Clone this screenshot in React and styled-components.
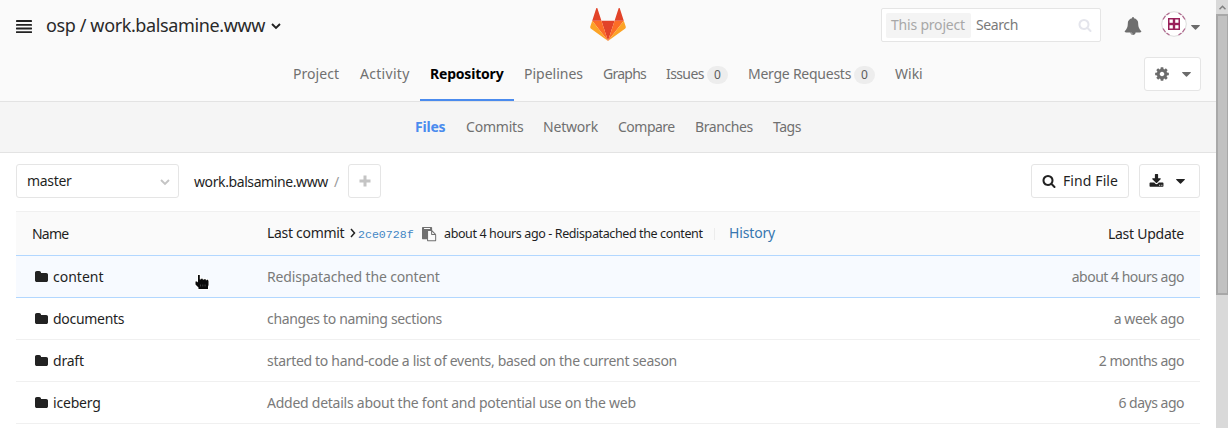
import React from "react";
import styled, { createGlobalStyle, css } from "styled-components";

const Global = createGlobalStyle`
  *, *::before, *::after { box-sizing: border-box; }
  html, body { margin: 0; height: 100%; overflow: hidden; background: #fff; }
  body { font: 14px/20px "Noto Sans", "Open Sans", sans-serif; color: #1f1f1f; }
  #root { height: 100%; }
  svg { display: block; flex: none; }
`;

const Window = styled.div`
  display: flex;
  height: 428px;
  overflow: hidden;
`;
const Page = styled.div`
  width: 1216px;
  flex: none;
`;

/* Text of a fixed measure, so that neighbours keep their places. */
const Label = styled.span`
  display: block;
  flex: none;
  white-space: pre;
  width: ${(p) => (p.$w ? p.$w + "px" : "auto")};
  letter-spacing: ${(p) => p.$ls || 0}px;
`;

/* ---------- header ---------- */
const Header = styled.header`
  height: 102px;
  background: #fafafa;
  border-bottom: 1px solid #e3e3e3;
`;
const TopBar = styled.div`
  display: flex;
  height: 50px;
  padding-left: 16px;
`;
const Side = styled.div`
  display: flex;
  align-items: flex-start;
  width: ${(p) => p.$w}px;
  flex: none;
`;
const MenuToggle = styled.div`
  margin: 20px 14px 0 0;
`;
const ProjectTitle = styled.h1`
  display: flex;
  margin: 11px 0 0;
  font-size: 18px;
  line-height: 28px;
  font-weight: 400;
  color: #292929;
  svg { margin: 12px 0 0 1px; }
`;
const Logo = styled.div`
  width: 291px;
  padding: 8px 0 0 1px;
`;
const SearchBox = styled.div`
  display: flex;
  align-items: center;
  width: 220px;
  height: 34px;
  margin: 8px 0 0 1px;
  padding: 0 8px 0 4px;
  background: #fff;
  border: 1px solid #e5e5e5;
  border-radius: 2px;
`;
const Scope = styled.span`
  height: 25px;
  width: 85px;
  padding-left: 5px;
  margin-right: 5px;
  line-height: 24px;
  background: #f4f4f4;
  color: #a8a8a8;
  border-radius: 2px;
`;
const SearchHint = styled.span`
  flex: 1;
  color: #7a7a7a;
`;
const Bell = styled.div`
  margin: 17px 0 0 23px;
`;
const Avatar = styled.div`
  margin: 11px 4px 0 19px;
`;
const CaretSlot = styled.div`
  padding-top: 25px;
`;

const NavRow = styled.div`
  display: flex;
  height: 51px;
  padding-left: 278px;
`;
const NavItem = styled.a`
  display: flex;
  height: 51px;
  width: ${(p) => p.$w}px;
  padding: 14px 0 0 ${(p) => p.$pad}px;
  flex: none;
  color: ${(p) => (p.$active ? "#000" : "#707070")};
  font-weight: ${(p) => (p.$active ? 700 : 400)};
  ${(p) => p.$active && css`border-bottom: 2px solid #4a8bee;`}
`;
const Badge = styled.span`
  width: 21px;
  height: 18px;
  margin: 2px 0 0 3px;
  border-radius: 9px;
  background: #ededed;
  color: #5c5c5c;
  font-size: 12px;
  line-height: 17px;
  text-align: center;
`;
const Button = styled.button`
  display: flex;
  align-items: center;
  flex: none;
  width: ${(p) => p.$w}px;
  height: 34px;
  padding: 0 0 0 ${(p) => p.$pad}px;
  gap: ${(p) => p.$gap || 0}px;
  background: #fff;
  border: 1px solid #e5e5e5;
  border-radius: 3px;
  font: inherit;
  color: inherit;
`;
const SettingsSlot = styled.div`
  margin: 7px 15px 0 auto;
`;

const SubNav = styled.nav`
  display: flex;
  height: 51px;
  padding: 15px 0 0 415px;
  background: #f5f5f5;
  border-bottom: 1px solid #e3e3e3;
`;
const SubItem = styled.a`
  width: ${(p) => p.$w}px;
  letter-spacing: ${(p) => p.$ls}px;
  flex: none;
  color: ${(p) => (p.$active ? "#4a8bee" : "#707070")};
  font-weight: ${(p) => (p.$active ? 700 : 400)};
`;

/* ---------- tree toolbar ---------- */
const Toolbar = styled.div`
  display: flex;
  height: 58px;
  padding: 11px 16px 0;
`;
const BranchSelect = styled.div`
  display: flex;
  align-items: center;
  justify-content: space-between;
  width: 163px;
  height: 34px;
  margin-right: 15px;
  padding: 0 8px 0 10px;
  border: 1px solid #e5e5e5;
  border-radius: 3px;
  svg { margin-top: 3px; }
`;
const Crumbs = styled.div`
  display: flex;
  padding-top: 8px;
  width: 154px;
`;
const Slash = styled.span`
  color: #9a9a9a;
`;
const Actions = styled.div`
  display: flex;
  gap: 10px;
  margin-left: auto;
`;

/* ---------- file table ---------- */
const Table = styled.div`
  margin: 0 16px;
  border-top: 1px solid #f0f0f0;
`;
const HeadRow = styled.div`
  display: flex;
  height: 43px;
  padding: 12px 16px 0;
  background: #fafafa;
`;
const Row = styled.div`
  display: flex;
  align-items: center;
  height: ${(p) => (p.$hover ? 43 : 42)}px;
  padding: 0 16px 0 18px;
  background: ${(p) => (p.$hover ? "#f7faff" : "#fff")};
  border-top: ${(p) => (p.$hover ? "1px solid #b2d7ff" : "0")};
  border-bottom: 1px solid ${(p) => (p.$hover ? "#b2d7ff" : "#f0f0f0")};
`;
const NameCell = styled.div`
  display: flex;
  align-items: center;
  gap: 4px;
  width: 233px;
`;
const Muted = styled.div`
  color: #7a7a7a;
  letter-spacing: ${(p) => p.$ls || 0}px;
  white-space: nowrap;
`;
const Updated = styled(Muted)`
  margin-left: auto;
`;
const HeadUpdated = styled(Updated)`
  color: #1f1f1f;
`;
const CommitCell = styled.div`
  display: flex;
  align-items: flex-start;
  margin-top: -1px;
`;
const Sha = styled.code`
  width: 64px;
  padding-top: 2px;
  font: 11.6px/20px "Liberation Mono", monospace;
  color: #4286c4;
`;
const CommitText = styled(Label)`
  font-size: 12.5px;
  line-height: 21px;
`;
const Divider = styled.span`
  width: 1px;
  height: 12px;
  margin: 5px 14px 0 11px;
  background: #ececec;
`;
const Link = styled(Label)`
  color: #3777b0;
`;

/* ---------- scrollbar and pointer ---------- */
const Scrollbar = styled.div`
  display: flex;
  flex-direction: column;
  width: 12px;
  flex: none;
  background: #d9d9d9;
`;
const ScrollUp = styled.div`
  display: flex;
  align-items: center;
  justify-content: center;
  height: 14px;
`;
const Thumb = styled.div`
  height: 281px;
  background: #c1c1c1;
  border: 1px solid #a8a8a8;
  border-width: 2px 1px 2px 2px;
`;
const Pointer = styled.svg`
  position: absolute;
  left: 194px;
  top: 273px;
`;

const paths = {
  folder: "M1728 608v704q0 92-66 158t-158 66h-1216q-92 0-158-66t-66-158v-960q0-92 66-158t158-66h320q92 0 158 66t66 158v32h672q92 0 158 66t66 158z",
  search: "M1216 832q0-185-131.500-316.500t-316.500-131.500-316.500 131.500-131.500 316.500 131.500 316.500 316.500 131.500 316.500-131.500 131.500-316.500zm512 832q0 52-38 90t-90 38q-54 0-90-38l-343-342q-179 124-399 124-143 0-273.500-55.500t-225-150-150-225-55.500-273.500 55.500-273.500 150-225 225-150 273.500-55.500 273.500 55.500 225 150 150 225 55.500 273.500q0 220-124 399l343 343q37 37 37 90z",
  download: "M1344 1344q0-26-19-45t-45-19-45 19-19 45 19 45 45 19 45-19 19-45zm256 0q0-26-19-45t-45-19-45 19-19 45 19 45 45 19 45-19 19-45zm128-224v320q0 40-28 68t-68 28h-1472q-40 0-68-28t-28-68v-320q0-40 28-68t68-28h465l135 136q58 56 136 56t136-56l136-136h464q40 0 68 28t28 68zm-325-569q17 41-14 70l-448 448q-18 19-45 19t-45-19l-448-448q-31-29-14-70 17-39 59-39h256v-448q0-26 19-45t45-19h256q26 0 45 19t19 45v448h256q42 0 59 39z",
  cog: "M1152 896q0-106-75-181t-181-75-181 75-75 181 75 181 181 75 181-75 75-181zm512-109v222q0 12-8 23t-20 13l-185 28q-19 54-39 91 35 50 107 138 10 12 10 25t-9 23q-27 37-99 108t-94 71q-12 0-26-9l-138-108q-44 23-91 38-16 136-29 186-7 28-36 28h-222q-14 0-24.500-8.500t-11.500-21.500l-28-184q-49-16-90-37l-141 107q-10 9-25 9-14 0-25-11-126-114-165-168-7-10-7-23 0-12 8-23 15-21 51-66.500t54-70.500q-27-50-41-99l-183-27q-13-2-21-12.500t-8-23.500v-222q0-12 8-23t19-13l186-28q14-46 39-92-40-57-107-138-10-12-10-24 0-10 9-23 26-36 98.500-107.500t94.500-71.500q13 0 26 10l138 107q44-23 91-38 16-136 29-186 7-28 36-28h222q14 0 24.500 8.500t11.500 21.500l28 184q49 16 90 37l142-107q9-9 24-9 13 0 25 10 129 119 165 170 7 8 7 22 0 12-8 23-15 21-51 66.500t-54 70.500q26 50 41 98l183 28q13 2 21 12.500t8 23.500z",
  bell: "M912 1696q0-16-16-16-59 0-101.500-42.500t-42.500-101.500q0-16-16-16t-16 16q0 73 51.500 124.500t124.500 51.500q16 0 16-16zm816-288q0 52-38 90t-90 38h-448q0 106-75 181t-181 75-181-75-75-181h-448q-52 0-90-38t-38-90q50-42 91-88t85-119.500 74.500-158.500 50-206 19.500-260q0-152 117-282.500t307-158.500q-8-19-8-39 0-40 28-68t68-28 68 28 28 68q0 20-8 39 190 28 307 158.500t117 282.500q0 139 19.500 260t50 206 74.500 158.500 85 119.500 91 88z",
  paste: "M768 1664h896v-640h-416q-40 0-68-28t-28-68v-416h-384v1152zm256-1440v-64q0-13-9.500-22.500t-22.500-9.500h-704q-13 0-22.500 9.500t-9.500 22.500v64q0 13 9.500 22.500t22.500 9.500h704q13 0 22.500-9.500t9.500-22.500zm256 672h299l-299-299v299zm512 128v672q0 40-28 68t-68 28h-960q-40 0-68-28t-28-68v-160h-544q-40 0-68-28t-28-68v-1344q0-40 28-68t68-28h1088q40 0 68 28t28 68v328q21 13 36 28l408 408q28 28 48 76t20 88z",
};

const Icon = ({ name, size = 14, color = "#222" }) => (
  <svg width={size} height={size} viewBox="0 0 1792 1792" fill={color} aria-hidden="true">
    <path d={paths[name]} />
  </svg>
);
/* Folder glyph, flush with the left edge of its box. */
const Folder = () => (
  <svg width="15" height="14" viewBox="0 0 1920 1792" fill="#222" aria-hidden="true">
    <path transform="translate(64 0)" d={paths.folder} />
  </svg>
);
const Bars = () => (
  <svg width="16" height="14" viewBox="0 0 16 14" fill="#222">
    <rect y="0" width="16" height="2" rx=".4" />
    <rect y="4" width="16" height="1.800" rx=".4" />
    <rect y="7.600" width="16" height="1.900" rx=".4" />
    <rect y="11.200" width="16" height="1.900" rx=".4" />
  </svg>
);
const Caret = ({ color = "#6b6b6b" }) => (
  <svg width="9" height="5" viewBox="0 0 9 5" fill={color}>
    <path d="M.6 0h7.800a.5.5 0 0 1 .4.800L5 4.500a.7.7 0 0 1-1 0L.2.8A.5.5 0 0 1 .6 0z" />
  </svg>
);
const Chevron = ({ color, w = 10, h = 7, stroke = 1.9 }) => (
  <svg width={w} height={h} viewBox="0 0 10 7" fill="none" stroke={color} strokeWidth={stroke}>
    <path d="M1 1l4 3.900L9 1" />
  </svg>
);
const ScrollArrow = () => (
  <svg width="7" height="5" viewBox="0 0 7 5" fill="none" stroke="#808080" strokeWidth="1.500">
    <path d="M0.500 4.200l3-3 3 3" />
  </svg>
);

const Tanuki = () => (
  <svg width="36" height="33" viewBox="0 0 210 194">
    <path fill="#e24329" d="M105 193.700L143.700 74.700H66.400z" />
    <path fill="#fc6d26" d="M105 193.700L66.400 74.700H12.300zM105 193.700L143.700 74.700h54.100z" />
    <path fill="#fca326" d="M12.300 74.700L.5 110.900c-1.100 3.300.1 6.900 2.900 8.900L105 193.700zM197.800 74.700l11.800 36.200c1.100 3.300-.1 6.900-2.900 8.900L105 193.700z" />
    <path fill="#e24329" d="M12.300 74.700h54.100L43.100 3.100c-1.200-3.700-6.400-3.700-7.600 0zM197.800 74.700h-54.100L167 3.100c1.200-3.700 6.400-3.700 7.600 0z" />
  </svg>
);

const Identicon = () => (
  <svg width="26" height="26" viewBox="0 0 26 26">
    <circle cx="13" cy="13" r="12.300" fill="#fff" stroke="#dcdcdc" strokeWidth="1" />
    <g stroke="#b0668c" strokeWidth="1.200" fill="none">
      <path d="M2 8.500L4.500 4.800M5.500 4L8.500 2M17.500 2l3 2M21.500 4.800L24 8.500M2 17.500l2.500 3.700M5.500 22l3 2M17.500 24l3-2M21.500 21.200L24 17.500" />
    </g>
    <rect x="7" y="7" width="12" height="12" fill="#98215a" />
    <g fill="#fff">
      <rect x="8.500" y="8.500" width="3.300" height="3.300" />
      <rect x="14.200" y="8.500" width="3.300" height="3.300" />
      <rect x="8.500" y="14.200" width="3.300" height="3.300" />
      <rect x="14.200" y="14.200" width="3.300" height="3.300" />
    </g>
  </svg>
);

const nav = [
  { text: "Project", w: 67, pad: 15, ls: 0.05 },
  { text: "Activity", w: 75, pad: 15, ls: 0.3 },
  { text: "Repository", w: 94, pad: 10, ls: -0.2, active: true },
  { text: "Pipelines", w: 74, pad: 10, ls: 0 },
  { text: "Graphs", w: 63, pad: 15, ls: -0.75 },
  { text: "Issues", w: 82, pad: 15, ls: -0.6, count: 0, lw: 38 },
  { text: "Merge Requests", w: 147, pad: 15, ls: -0.25, count: 0, lw: 103 },
  { text: "Wiki", w: 60, pad: 15, ls: 0 },
];
const subnav = [
  { text: "Files", w: 51, ls: -0.2, active: true },
  { text: "Commits", w: 77, ls: -0.2 },
  { text: "Network", w: 75, ls: -0.2 },
  { text: "Compare", w: 77, ls: -0.5 },
  { text: "Branches", w: 78, ls: -0.4 },
  { text: "Tags", w: 50, ls: -0.5 },
];
const files = [
  { name: "content", ls: 0, msg: "Redispatached the content", mls: -0.14, when: "about 4 hours ago", wls: -0.5, hover: true },
  { name: "documents", ls: -0.3, msg: "changes to naming sections", mls: -0.34, when: "a week ago", wls: -0.4 },
  { name: "draft", ls: -0.2, msg: "started to hand-code a list of events, based on the current season", mls: -0.31, when: "2 months ago", wls: -0.47 },
  { name: "iceberg", ls: -0.2, msg: "Added details about the font and potential use on the web", mls: -0.25, when: "6 days ago", wls: -0.5 },
];

export default function App() {
  return (
    <>
      <Global />
      <Window>
        <Page>
          <Header>
            <TopBar>
              <Side $w={573}>
                <MenuToggle><Bars /></MenuToggle>
                <ProjectTitle>
                  <Label $w={224} $ls={-0.38}>osp / work.balsamine.www</Label>
                  <Chevron color="#222" />
                </ProjectTitle>
              </Side>
              <Logo><Tanuki /></Logo>
              <Side $w={336}>
                <SearchBox>
                  <Scope><Label $ls={-0.2}>This project</Label></Scope>
                  <SearchHint><Label $ls={-0.4}>Search</Label></SearchHint>
                  <Icon name="search" color="#e4e5ec" />
                </SearchBox>
                <Bell><Icon name="bell" size={18} color="#6e6e6e" /></Bell>
                <Avatar><Identicon /></Avatar>
                <CaretSlot><Caret /></CaretSlot>
              </Side>
            </TopBar>
            <NavRow>
              {nav.map((n) => (
                <NavItem key={n.text} $w={n.w} $pad={n.pad} $active={n.active}>
                  <Label $w={n.lw} $ls={n.ls}>{n.text}</Label>
                  {n.count !== undefined && <Badge>{n.count}</Badge>}
                </NavItem>
              ))}
              <SettingsSlot>
                <Button $w={57} $pad={9} $gap={12}>
                  <Icon name="cog" size={16} color="#6b6b6b" />
                  <Caret />
                </Button>
              </SettingsSlot>
            </NavRow>
          </Header>
          <SubNav>
            {subnav.map((s) => (
              <SubItem key={s.text} $w={s.w} $ls={s.ls} $active={s.active}>{s.text}</SubItem>
            ))}
          </SubNav>
          <Toolbar>
            <BranchSelect>
              <Label $ls={-0.3}>master</Label>
              <Chevron color="#c4c4c4" />
            </BranchSelect>
            <Crumbs>
              <Label $w={140} $ls={-0.4}>work.balsamine.www</Label>
              <Slash>/</Slash>
            </Crumbs>
            <Button $w={33} $pad={10}>
              <svg width="12" height="12" viewBox="0 0 12 12" fill="#c4c4c4">
                <path d="M4.500 0.500h3v4h4v3h-4v4h-3v-4h-4v-3h4z" />
              </svg>
            </Button>
            <Actions>
              <Button $w={98} $pad={10} $gap={7}>
                <Icon name="search" />
                <Label $ls={0.1}>Find File</Label>
              </Button>
              <Button $w={61} $pad={9} $gap={12}>
                <Icon name="download" size={15} />
                <Caret color="#222" />
              </Button>
            </Actions>
          </Toolbar>
          <Table>
            <HeadRow>
              <Label $w={235} $ls={-0.8}>Name</Label>
              <CommitCell>
                <Label $w={83} $ls={-0.3}>Last commit</Label>
                <svg width="8" height="20" viewBox="0 0 8 20" fill="none" stroke="#222" strokeWidth="1.500">
                  <path d="M1 6l3.500 4L1 14" />
                </svg>
                <Sha>2ce0728f</Sha>
                <svg width="22" height="20" viewBox="0 0 22 20">
                  <g transform="translate(0 4) scale(0.0079)" fill="#707070"><path d={paths.paste} /></g>
                </svg>
                <CommitText $w={259} $ls={-0.38}>about 4 hours ago - Redispatached the content</CommitText>
                <Divider />
                <Link $ls={-0.15}>History</Link>
              </CommitCell>
              <HeadUpdated $ls={-0.25}>Last Update</HeadUpdated>
            </HeadRow>
            {files.map((f) => (
              <Row key={f.name} $hover={f.hover}>
                <NameCell>
                  <Folder />
                  <Label $ls={f.ls}>{f.name}</Label>
                </NameCell>
                <Muted $ls={f.mls}>{f.msg}</Muted>
                <Updated $ls={f.wls}>{f.when}</Updated>
              </Row>
            ))}
          </Table>
        </Page>
        <Scrollbar>
          <ScrollUp><ScrollArrow /></ScrollUp>
          <Thumb />
        </Scrollbar>
      </Window>
      <Pointer width="18" height="19" viewBox="0 0 18 19">
        <path
          d="M4 2h1.800v4.500h1V5.800h2v1h1V6.200h2v1h1V6.800h1.200l.5 1.500V12l-.5 1.500V16H4.500v-1.500L1.500 11.500V8.500H3l1 1z"
          fill="#0a0a0a" stroke="#fff" strokeWidth="1.800" paintOrder="stroke"
        />
        <path d="M6.500 11.500v2M8.800 11.500v2M11.100 11.500v2" stroke="#555" strokeWidth=".7" />
      </Pointer>
    </>
  );
}
